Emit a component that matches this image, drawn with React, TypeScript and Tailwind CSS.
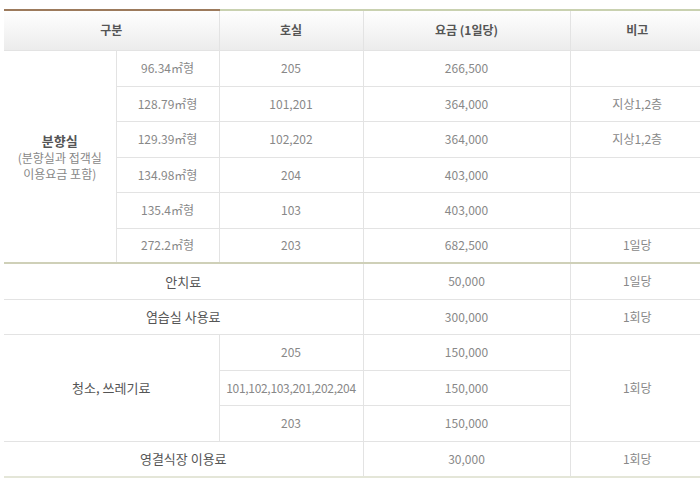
const rooms = [
  ["96.34㎡형", "205", "266,500", ""],
  ["128.79㎡형", "101,201", "364,000", "지상1,2층"],
  ["129.39㎡형", "102,202", "364,000", "지상1,2층"],
  ["134.98㎡형", "204", "403,000", ""],
  ["135.4㎡형", "103", "403,000", ""],
  ["272.2㎡형", "203", "682,500", "1일당"],
];

const heights = ["h-[36px]", "h-[35px]", "h-[36px]", "h-[35px]", "h-[36px]", "h-[35px]"];

const td = "border border-[#e3e3e3] text-center align-middle p-0";
const th = "text-center align-middle p-0 font-semibold text-[#555] border-x border-[#e3e3e3]";

export default function App() {
  return (
    <div
      className="w-[700px] h-[482px] bg-white pt-[9px] pl-[4px] overflow-hidden text-[12px] text-[#888]"
      style={{ fontFamily: '"Noto Sans CJK KR", "Noto Sans", sans-serif' }}
    >
      <table className="w-[700px] table-fixed border-collapse">
        <colgroup>
          <col className="w-[112px]" />
          <col className="w-[103px]" />
          <col className="w-[144px]" />
          <col className="w-[207px]" />
          <col className="w-[134px]" />
        </colgroup>
        <thead>
          <tr className="h-[40px] bg-gradient-to-b from-white to-[#ececec]">
            <th colSpan={2} className={`${th} border-t-2 border-t-[#9c7a5c] border-l-0`}>
              구분
            </th>
            <th className={`${th} border-t-2 border-t-[#c9d1b0]`}>호실</th>
            <th className={`${th} border-t-2 border-t-[#c9d1b0]`}>요금 (1일당)</th>
            <th className={`${th} border-t-2 border-t-[#c9d1b0] border-r-0`}>비고</th>
          </tr>
        </thead>
        <tbody>
          {rooms.map((r, i) => (
            <tr key={i} className={heights[i]}>
              {i === 0 && (
                <td rowSpan={6} className={`${td} border-l-0`}>
                  <div className="flex flex-col items-center gap-px">
                    <span className="font-bold text-[#555] text-[13px] leading-[17px]">분향실</span>
                    <span className="leading-[15px]">(분향실과 접객실</span>
                    <span className="leading-[15px]">이용요금 포함)</span>
                  </div>
                </td>
              )}
              <td className={td}>{r[0]}</td>
              <td className={td}>{r[1]}</td>
              <td className={td}>{r[2]}</td>
              <td className={`${td} border-r-0`}>{r[3]}</td>
            </tr>
          ))}
          <tr className="h-[36px] border-t-2 border-t-[#cfd0b8]">
            <td colSpan={3} className={`${td} border-l-0 text-[#555] text-[13px]`}>안치료</td>
            <td className={td}>50,000</td>
            <td className={`${td} border-r-0`}>1일당</td>
          </tr>
          <tr className="h-[35px]">
            <td colSpan={3} className={`${td} border-l-0 text-[#555] text-[13px]`}>염습실 사용료</td>
            <td className={td}>300,000</td>
            <td className={`${td} border-r-0`}>1회당</td>
          </tr>
          <tr className="h-[36px]">
            <td rowSpan={3} colSpan={2} className={`${td} border-l-0 text-[#555] text-[13px]`}>
              청소, 쓰레기료
            </td>
            <td className={td}>205</td>
            <td className={td}>150,000</td>
            <td rowSpan={3} className={`${td} border-r-0`}>1회당</td>
          </tr>
          <tr className="h-[35px]">
            <td className={`${td} whitespace-nowrap tracking-[-0.3px]`}>101,102,103,201,202,204</td>
            <td className={td}>150,000</td>
          </tr>
          <tr className="h-[36px]">
            <td className={td}>203</td>
            <td className={td}>150,000</td>
          </tr>
          <tr className="h-[36px] border-b-2 border-b-[#e4e6d8]">
            <td colSpan={3} className={`${td} border-l-0 text-[#555] text-[13px]`}>영결식장 이용료</td>
            <td className={td}>30,000</td>
            <td className={`${td} border-r-0`}>1회당</td>
          </tr>
        </tbody>
      </table>
    </div>
  );
}
